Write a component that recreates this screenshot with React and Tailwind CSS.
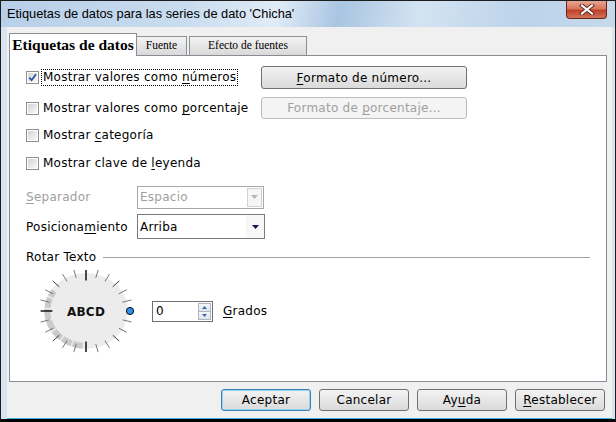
import React from "react";

const sans = "font-['DejaVu_Sans',sans-serif]";

function U({ children }) {
  return <span className="underline underline-offset-[2px]">{children}</span>;
}

function Check({ checked }) {
  return (
    <span className="flex h-[13px] w-[13px] shrink-0 border border-[#8e8f8f] bg-white p-[1px]">
      <span className="flex flex-1 items-center justify-center bg-[linear-gradient(135deg,#d4d4d4,#f8f8f8)]">
        {checked && (
          <svg width="9" height="9" viewBox="0 0 9 9">
            <path d="M1.2 4.6 L3.6 7.2 L8 1.2" fill="none" stroke="#2d50a8" strokeWidth="1.8" />
          </svg>
        )}
      </span>
    </span>
  );
}

function Dial() {
  const cx = 50;
  const cy = 43;
  const rx = 42;
  const ry = 38;
  const ticks = [];
  for (let a = 15; a < 360; a += 15) {
    const t = (a * Math.PI) / 180;
    const major = a % 90 === 0;
    const r1 = major ? 0.8 : 0.9;
    const r2 = major ? 1.08 : 1.12;
    ticks.push(
      <line
        key={a}
        x1={cx + rx * r1 * Math.cos(t)}
        y1={cy + ry * r1 * Math.sin(t)}
        x2={cx + rx * r2 * Math.cos(t)}
        y2={cy + ry * r2 * Math.sin(t)}
        stroke={major ? "#000" : a % 45 === 0 ? "#2a2a2a" : "#6a6a6a"}
        strokeWidth={major ? 1.4 : 0.9}
      />
    );
  }
  const pt = (deg, k) => {
    const t = (deg * Math.PI) / 180;
    return [cx + rx * k * Math.cos(t), cy + ry * k * Math.sin(t)];
  };
  const [ax, ay] = pt(95, 0.92);
  const [bx, by] = pt(215, 0.92);
  return (
    <svg width="104" height="86" viewBox="0 0 104 86" className="shrink-0">
      <ellipse cx={cx} cy={cy} rx={rx} ry={ry} fill="#ececec" />
      <path
        d={`M ${ax} ${ay} A ${rx * 0.92} ${ry * 0.92} 0 0 1 ${bx} ${by}`}
        fill="none"
        stroke="#cacaca"
        strokeWidth="6"
        strokeDasharray="10 1.5"
      />
      {ticks}
      <text
        x={cx}
        y={cy + 4.5}
        textAnchor="middle"
        fontFamily="DejaVu Sans, sans-serif"
        fontWeight="bold"
        fontSize="12"
        fill="#111"
      >
        ABCD
      </text>
      <circle cx="94" cy={cy} r="3.6" fill="#2d8ff0" stroke="#0a0a0a" strokeWidth="1" />
    </svg>
  );
}

function Btn({ children, variant }) {
  const look =
    variant === "default"
      ? "border-[#3c7fb1] bg-[linear-gradient(#f3f3f3,#dadada)] shadow-[inset_0_0_0_1px_#8fd6f4]"
      : "border-[#707070] bg-[linear-gradient(#f3f3f3,#dadada)]";
  return (
    <button className={`flex h-[22px] w-[90px] items-center justify-center rounded-[3px] border ${look}`}>
      <span>{children}</span>
    </button>
  );
}

export default function App() {
  return (
    <div className="flex h-[422px] w-[616px] flex-col border border-[#1d1d1d] border-b-[3px] border-b-black bg-[#d8e4f0]">
      {/* title bar */}
      <div className="flex h-[26px] shrink-0 items-start justify-between bg-[linear-gradient(100deg,#b7cfe8_0%,#c9dcef_30%,#e0ebf6_45%,#a9c5e2_55%,#d3e3f2_68%,#bcd3ea_85%,#c6d9ec_100%)] pl-[6px] pr-[8px]">
        <span className="mt-[5px] font-['Liberation_Sans',sans-serif] text-[12.8px] leading-[16px] text-black">
          Etiquetas de datos para las series de dato 'Chicha'
        </span>
        <div className="flex h-[18px] w-[41px] items-center justify-center rounded-b-[4px] border border-t-0 border-[#6e2518] bg-[linear-gradient(#e7a593_0%,#d9765f_45%,#c2422a_55%,#d0735c_100%)]">
          <svg width="16" height="11" viewBox="0 0 16 11">
            <path d="M3 1.5 L13 9.5 M13 1.5 L3 9.5" stroke="#5a2018" strokeWidth="4" strokeLinecap="square" />
            <path d="M3 1.5 L13 9.5 M13 1.5 L3 9.5" stroke="#ffffff" strokeWidth="2.2" strokeLinecap="square" />
          </svg>
        </div>
      </div>

      {/* client area */}
      <div className={`ml-[6px] mr-[3px] flex flex-1 flex-col border-b border-b-[#3fb2e2] bg-[#f0f0f0] ${sans} text-[12px] tracking-[0.25px] text-black`}>
        {/* tabs */}
        <div className="mt-[6px] ml-[2px] flex h-[22px] items-end tracking-normal">
          <div className="relative z-10 -mb-px flex h-[23px] w-[128px] items-center justify-center border border-b-0 border-[#898c95] bg-white font-['Liberation_Serif',serif] text-[15.5px] font-bold">
            Etiquetas de datos
          </div>
          <div className="flex h-[19px] w-[50px] items-center justify-center border border-l-0 border-b-0 border-[#8e8f8f] bg-[linear-gradient(#f4f4f4,#d9d9d9)] font-['Liberation_Serif',serif] text-[11.5px]">
            Fuente
          </div>
          <div className="ml-[2px] flex h-[19px] w-[118px] items-center justify-center border border-b-0 border-[#8e8f8f] bg-[linear-gradient(#f4f4f4,#d9d9d9)] font-['Liberation_Serif',serif] text-[11.5px]">
            Efecto de fuentes
          </div>
        </div>

        {/* tab panel */}
        <div className="ml-[2px] flex h-[327px] w-[598px] flex-col border border-[#898c95] bg-white pl-[16px] pr-[16px] pt-[10px]">
          <div className="flex h-[23px] items-center">
            <div className="flex w-[235px] items-center">
              <Check checked />
              <span className="ml-[2px] border border-dotted border-black px-[1px] leading-[15px]">
                Mostrar valores como <U>n</U>úmeros
              </span>
            </div>
            <button className="flex h-[23px] w-[206px] items-center justify-center rounded-[3px] border border-[#707070] bg-[linear-gradient(#f3f3f3,#dadada)]">
              <span>
                <U>F</U>ormato de número...
              </span>
            </button>
          </div>

          <div className="mt-[8px] flex h-[22px] items-center">
            <div className="flex w-[235px] items-center">
              <Check />
              <span className="ml-[4px]">
                Mostrar valores como <U>p</U>orcentaje
              </span>
            </div>
            <button className="flex h-[22px] w-[206px] items-center justify-center rounded-[3px] border border-[#bdbdbd] bg-[#f4f4f4] text-[#a0a0a0]">
              <span>
                Formato de <U>p</U>orcentaje...
              </span>
            </button>
          </div>

          <div className="mt-[5px] flex h-[22px] items-center">
            <Check />
            <span className="ml-[4px]">
              Mostrar <U>c</U>ategoría
            </span>
          </div>

          <div className="mt-[6px] flex h-[22px] items-center">
            <Check />
            <span className="ml-[4px]">
              Mostrar clave de <U>l</U>eyenda
            </span>
          </div>

          <div className="mt-[12px] flex h-[22px] items-center">
            <span className="w-[111px] text-[#a0a0a0]">
              <U>S</U>eparador
            </span>
            <div className="flex h-[23px] w-[127px] items-center border border-[#a8a8a8] bg-white pl-[2px] text-[#a0a0a0]">
              Espacio
              <div className="ml-auto mr-[1px] flex h-[19px] w-[15px] items-center justify-center border border-[#d2d2d2] bg-[#f6f6f6]">
                <svg width="7" height="4" viewBox="0 0 7 4">
                  <path d="M0 0 L7 0 L3.5 4 Z" fill="#b4b4b4" />
                </svg>
              </div>
            </div>
          </div>

          <div className="mt-[6px] flex h-[25px] items-center">
            <span className="w-[111px]">
              Posiciona<U>m</U>iento
            </span>
            <div className="flex h-[25px] w-[128px] items-center border border-[#7a7a7a] bg-white pl-[2px]">
              Arriba
              <div className="ml-auto flex h-full w-[18px] items-center justify-center bg-[#f7f7f7]">
                <svg width="7" height="4" viewBox="0 0 7 4">
                  <path d="M0 0 L7 0 L3.5 4 Z" fill="#14145a" />
                </svg>
              </div>
            </div>
          </div>

          <div className="mt-[10px] flex h-[16px] items-center">
            <span>Rotar Texto</span>
            <div className="ml-[7px] h-px flex-1 bg-[#a0a0a0]" />
          </div>

          <div className="mt-[3px] flex h-[86px] items-center">
            <div className="ml-[10px]">
              <Dial />
            </div>
            <div className="ml-[12px] flex h-[21px] w-[61px] items-center border border-[#6f6f6f] bg-white pl-[3px] pr-[1px]">
              0
              <div className="ml-auto flex h-[17px] w-[13px] flex-col border border-[#a9b6c4]">
                <div className="flex flex-1 items-center justify-center bg-[linear-gradient(#f4f6f8,#dfe5eb)]">
                  <svg width="5" height="3" viewBox="0 0 5 3">
                    <path d="M0 3 L5 3 L2.5 0 Z" fill="#3a68a8" />
                  </svg>
                </div>
                <div className="flex flex-1 items-center justify-center border-t border-[#a9b6c4] bg-[linear-gradient(#f4f6f8,#dfe5eb)]">
                  <svg width="5" height="3" viewBox="0 0 5 3">
                    <path d="M0 0 L5 0 L2.5 3 Z" fill="#3a68a8" />
                  </svg>
                </div>
              </div>
            </div>
            <span className="ml-[10px]">
              <U>G</U>rados
            </span>
          </div>
        </div>

        {/* dialog buttons */}
        <div className="mt-[7px] flex justify-end gap-[8px] pr-[7px]">
          <Btn variant="default">Aceptar</Btn>
          <Btn>Cancelar</Btn>
          <Btn>
            Ay<U>u</U>da
          </Btn>
          <Btn>
            <U>R</U>establecer
          </Btn>
        </div>
      </div>
    </div>
  );
}
